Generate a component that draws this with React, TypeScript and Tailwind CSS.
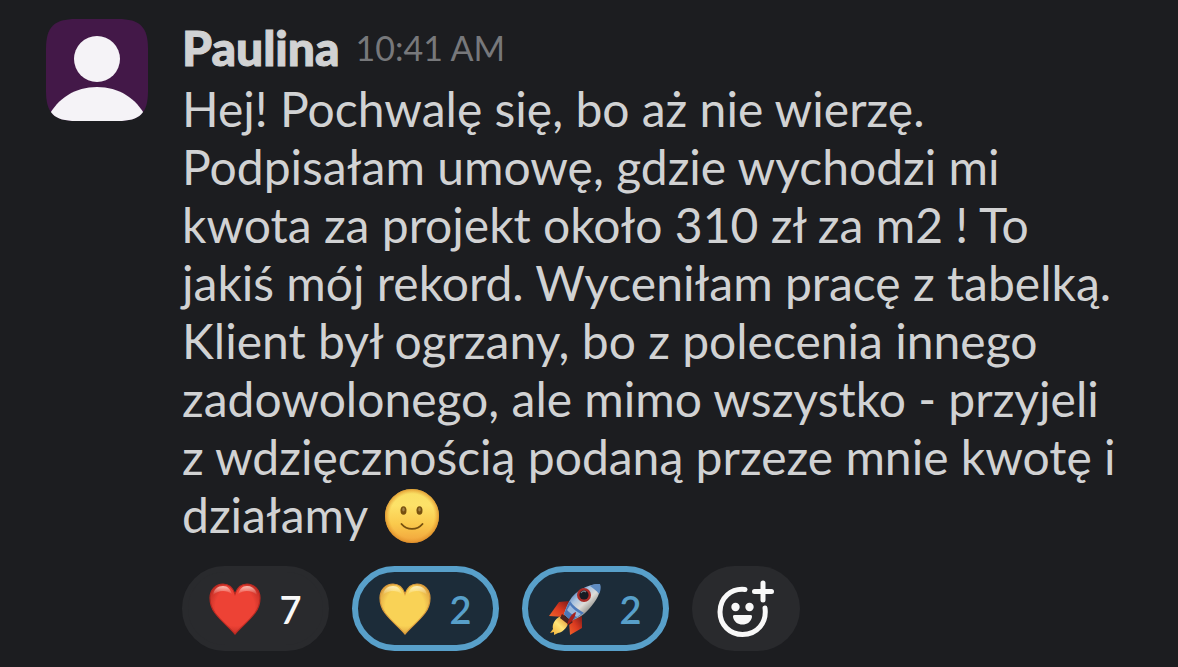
import type { ReactNode } from "react"
import clsx from "clsx"

const lines = [
  "Hej! Pochwalę się, bo aż nie wierzę.",
  "Podpisałam umowę, gdzie wychodzi mi",
  "kwota za projekt około 310 zł za m2 ! To",
  "jakiś mój rekord. Wyceniłam pracę z tabelką.",
  "Klient był ogrzany, bo z polecenia innego",
  "zadowolonego, ale mimo wszystko - przyjeli",
  "z wdzięcznością podaną przeze mnie kwotę i",
]

function Avatar() {
  return (
    <svg viewBox="0 0 102 102" className="size-[102px] shrink-0" role="img" aria-label="Paulina">
      <defs>
        <clipPath id="avatar-clip">
          <path d="M0 30C0 8 8 0 30 0H72C94 0 102 8 102 30V72C102 94 94 102 72 102H30C8 102 0 94 0 72Z" />
        </clipPath>
      </defs>
      <g clipPath="url(#avatar-clip)">
        <rect width="102" height="102" fill="#431848" />
        <circle cx="51" cy="40" r="23" fill="#f5f3f7" />
        <path d="M2 98C12 79 29 68 51 68S90 79 100 98V104H2Z" fill="#f5f3f7" />
      </g>
    </svg>
  )
}

function Smile() {
  return (
    <svg viewBox="0 0 54 54" className="ml-1.5 inline-block size-[54px] align-[-10px]" role="img" aria-label="Uśmiech">
      <defs>
        <linearGradient id="smile-fill" x1="0" y1="0" x2="0" y2="1">
          <stop offset="0" stopColor="#f8df63" />
          <stop offset="0.3" stopColor="#fde269" />
          <stop offset="0.65" stopColor="#fac94c" />
          <stop offset="1" stopColor="#f1a33c" />
        </linearGradient>
        <radialGradient id="smile-edge">
          <stop offset="0.82" stopColor="#e79a30" stopOpacity="0" />
          <stop offset="1" stopColor="#d98622" stopOpacity="0.75" />
        </radialGradient>
      </defs>
      <circle cx="27" cy="27" r="27" fill="url(#smile-fill)" />
      <circle cx="27" cy="27" r="27" fill="url(#smile-edge)" />
      <ellipse cx="18.5" cy="21.5" rx="3" ry="4.3" fill="#76500f" />
      <ellipse cx="34.5" cy="21.5" rx="3" ry="4.3" fill="#76500f" />
      <ellipse cx="18.5" cy="20.5" rx="1.2" ry="2" fill="#a18148" />
      <ellipse cx="34.5" cy="20.5" rx="1.2" ry="2" fill="#a18148" />
      <path d="M16.5 35C22 41.5 32 41.5 37.5 35" fill="none" stroke="#76500f" strokeWidth="1.9" strokeLinecap="round" />
    </svg>
  )
}

function Heart({ id, light, base, edge }: { id: string; light: string; base: string; edge: string }) {
  const shape =
    "M26 51C20 44 12 38 6 30C3 26 1 21 1 15C1 7 7 1 14 1C20 1 24 5 26 11C28 5 32 1 38 1C45 1 51 7 51 15C51 21 49 26 46 30C40 38 32 44 26 51Z"
  return (
    <svg viewBox="0 0 52 52" className="size-[52px]" aria-hidden="true">
      <defs>
        <radialGradient id={`${id}-fill`} cx="0.5" cy="0.45" r="0.6">
          <stop offset="0.3" stopColor={base} />
          <stop offset="0.65" stopColor={base} />
          <stop offset="1" stopColor={edge} />
        </radialGradient>
        <linearGradient id={`${id}-shine`} x1="0" y1="0" x2="0" y2="1">
          <stop offset="0" stopColor={light} stopOpacity="0.85" />
          <stop offset="1" stopColor={light} stopOpacity="0" />
        </linearGradient>
      </defs>
      <path d={shape} fill={`url(#${id}-fill)`} stroke={edge} strokeWidth="1.2" />
      <path d="M4 12C5 6 9 3 14 3S21 6 23 11C17 7 10 7 4 12Z" fill={`url(#${id}-shine)`} />
      <path d="M29 11C31 6 33 3 38 3S47 6 48 12C42 7 35 7 29 11Z" fill={`url(#${id}-shine)`} />
    </svg>
  )
}

function Rocket() {
  return (
    <svg viewBox="0 0 52 52" className="size-[52px]" aria-hidden="true">
      <defs>
        <linearGradient id="rocket-body" x1="0.25" y1="0.2" x2="0.75" y2="0.75">
          <stop offset="0" stopColor="#527db7" />
          <stop offset="0.3" stopColor="#a9c3e0" />
          <stop offset="0.6" stopColor="#dedcd8" />
          <stop offset="1" stopColor="#85847f" />
        </linearGradient>
        <linearGradient id="rocket-fin" x1="0" y1="1" x2="1" y2="0">
          <stop offset="0" stopColor="#f0652b" />
          <stop offset="0.5" stopColor="#dc3a20" />
          <stop offset="1" stopColor="#7c1a18" />
        </linearGradient>
        <linearGradient id="rocket-flame" x1="0" y1="1" x2="1" y2="0">
          <stop offset="0" stopColor="#f0a92e" />
          <stop offset="0.5" stopColor="#ffe578" />
          <stop offset="1" stopColor="#d77a20" />
        </linearGradient>
      </defs>
      <path d="M20 18L10 19L0 33L15 34Z" fill="url(#rocket-fin)" />
      <path d="M33 33V45L21 52L20 39Z" fill="url(#rocket-fin)" />
      <path d="M12 33C5 36 3 42 4 46L1 50L5 49V52L9 50C15 49 19 43 20 38Z" fill="url(#rocket-flame)" />
      <path d="M51 1C43 1 32 4 23 14C19 19 17 25 15 31L22 38C29 35 35 32 40 26C48 17 52 10 51 1Z" fill="url(#rocket-body)" />
      <path d="M51 1C47 1 44 1 41 3C44 5 48 8 50 11C52 7 52 4 51 1Z" fill="#5f8cc2" />
      <path d="M21 18C24 23 29 26 35 30C31 33 27 35 22 38L15 31C17 26 18 22 21 18Z" fill="#4b78b9" />
      <path d="M21 22C24 26 28 29 32 31L28 34C23 32 20 29 18 27Z" fill="#9bb8dc" />
      <path d="M13 31L24 39L20 42L11 35Z" fill="#4a2320" />
      <path d="M27 29C22 31 20 35 18 42C23 39 26 35 27 29Z" fill="#a51f1c" />
      <circle cx="35" cy="12" r="7" fill="#a92b27" />
      <circle cx="35" cy="12" r="4.6" fill="#171b22" />
      <path d="M32 10Q34 7 37 9" fill="none" stroke="#76808a" strokeWidth="1.2" />
    </svg>
  )
}

function AddReactionIcon() {
  return (
    <svg viewBox="0 0 58 58" className="size-[58px]" fill="none" stroke="#f8f8f8" strokeWidth="5" strokeLinecap="round" aria-hidden="true">
      <path d="M28 9.5C14 8 3 18 3 32C3 45 13 54.5 25.5 54.5C40 54.5 50 43 48 28" />
      <path d="M46 3V20M37.5 11.5H54.5" />
      <circle cx="18.5" cy="27" r="4.2" fill="#f8f8f8" stroke="none" />
      <circle cx="32.5" cy="27" r="4.2" fill="#f8f8f8" stroke="none" />
      <path d="M17.5 35H33.5Q35.5 35 35 37C34 42 30 44.5 25.5 44.5S17 42 16 37Q15.5 35 17.5 35Z" fill="#f8f8f8" stroke="none" />
    </svg>
  )
}

function Reaction({ icon, count, active = false, label }: { icon: ReactNode; count: number; active?: boolean; label: string }) {
  return (
    <button
      type="button"
      aria-label={`${label}, ${count}`}
      aria-pressed={active}
      className={clsx(
        "flex h-[85px] w-[147px] items-center justify-center gap-[18px] rounded-full border-[6px] font-['Lato_Semibold','Lato',sans-serif] text-[38px] leading-[46px] font-semibold",
        active ? "border-[#58a0ca] bg-[#1c2c39] text-[#58a0ca]" : "border-[#292a2d] bg-[#292a2d] text-[#f8f8f8]",
      )}
    >
      {icon}
      <span>{count}</span>
    </button>
  )
}

export default function App() {
  return (
    <main className="min-h-screen bg-[#1c1d20] font-['Lato',sans-serif] text-[#d1d2d3]">
      <article className="flex gap-[34px] pt-[19px] pr-4 pb-4 pl-[46px]">
        <Avatar />
        <div className="min-w-0 flex-1">
          <header className="mb-[3px] flex items-center gap-4">
            <h1 className="text-[48px] leading-[58px] font-black [-webkit-text-stroke:1px_#d1d2d3]">Paulina</h1>
            <time dateTime="10:41" className="text-[34px] leading-[42px] text-[#77787b]">
              10:41 AM
            </time>
          </header>
          <p className="text-[48px] leading-[58px] whitespace-nowrap">
            {lines.map((line) => (
              <span key={line} className="block">
                {line}
              </span>
            ))}
            <span className="block h-[58px]">
              działamy <Smile />
            </span>
          </p>
          <div className="mt-[22px] flex flex-wrap gap-[23px]">
            <Reaction label="Czerwone serce" count={7} icon={<Heart id="red" light="#ffd5cc" base="#ed4235" edge="#b92a22" />} />
            <Reaction label="Żółte serce" count={2} active icon={<Heart id="yellow" light="#fff8cf" base="#f9d256" edge="#d99a3c" />} />
            <Reaction label="Rakieta" count={2} active icon={<Rocket />} />
            <button
              type="button"
              aria-label="Dodaj reakcję"
              className="flex h-[85px] w-[108px] items-center justify-center rounded-full bg-[#292a2d]"
            >
              <AddReactionIcon />
            </button>
          </div>
        </div>
      </article>
    </main>
  )
}
